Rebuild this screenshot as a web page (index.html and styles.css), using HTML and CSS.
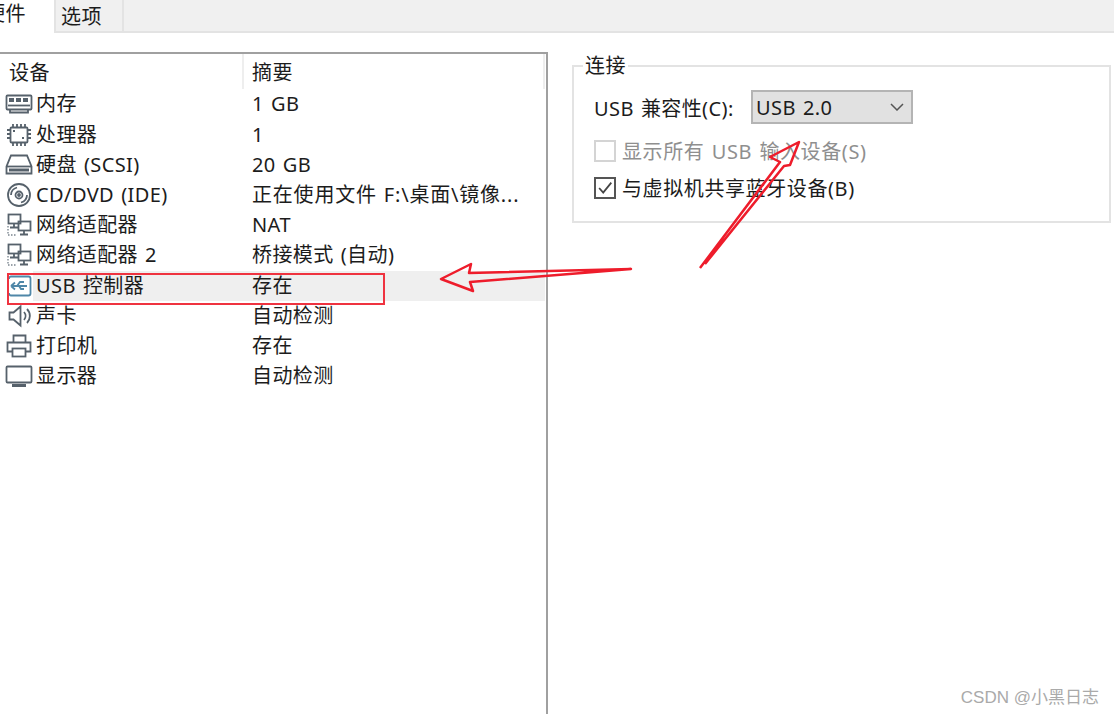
FILE: index.html
```html
<!DOCTYPE html>
<html lang="zh-CN">
<head>
    <meta charset="UTF-8">
    <title>虚拟机设置</title>
    <link rel="stylesheet" href="styles.css">
</head>
<body>

<div class="tabs">
    <div class="tab active"><span class="clipped">硬件</span></div>
    <div class="tab">选项</div>
</div>

<div class="content">
    <div class="devices">
        <div class="list-head">
            <div class="col-name">设备</div>
            <div class="col-value">摘要</div>
        </div>

        <div class="row">
            <svg class="icon" viewBox="0 0 28 24"><rect x="1.500" y="3.500" width="25" height="14" rx="1"/><rect class="solid" x="4" y="6" width="5" height="4"/><rect class="solid" x="11" y="6" width="5" height="4"/><rect class="solid" x="18" y="6" width="5" height="4"/><path d="M3 13.500h22"/><path d="M5 17.500v3h18v-3"/></svg>
            <div class="name">内存</div><div class="value">1 GB</div>
        </div>
        <div class="row">
            <svg class="icon" viewBox="0 0 28 24"><rect x="5.500" y="4.500" width="17" height="15" rx="1"/><path d="M8 1v3M12 1v3M16 1v3M20 1v3M8 20v3M12 20v3M16 20v3M20 20v3M2 7h3M2 11h3M2 15h3M23 7h3M23 11h3M23 15h3"/><rect class="solid" x="8" y="7" width="2" height="2"/><rect class="solid" x="17" y="14" width="2" height="2"/></svg>
            <div class="name">处理器</div><div class="value">1</div>
        </div>
        <div class="row">
            <svg class="icon" viewBox="0 0 28 24"><path d="M6 2.500h16l4.500 11v7h-25v-7z"/><path d="M1.500 13.500h25"/><path class="thick" d="M4 17h20"/></svg>
            <div class="name">硬盘 (SCSI)</div><div class="value">20 GB</div>
        </div>
        <div class="row">
            <svg class="icon" viewBox="0 0 28 24"><circle cx="14" cy="12" r="11"/><circle cx="14" cy="12" r="3.500"/><circle cx="14" cy="12" r="1"/><path d="M6 12a8 8 0 0 1 6-7.500M22 12a8 8 0 0 1-6 7.500"/></svg>
            <div class="name">CD/DVD (IDE)</div><div class="value wide">正在使用文件 F:\桌面\镜像...</div>
        </div>
        <div class="row">
            <svg class="icon" viewBox="0 0 28 24"><rect x="3.500" y="1.500" width="12" height="9"/><path d="M9 11v3M5 14.500h8"/><rect x="13.500" y="8.500" width="12" height="9"/><path d="M19 18v3M15 21.500h8"/><path class="dots" d="M3 13v9h9"/></svg>
            <div class="name">网络适配器</div><div class="value">NAT</div>
        </div>
        <div class="row">
            <svg class="icon" viewBox="0 0 28 24"><rect x="3.500" y="1.500" width="12" height="9"/><path d="M9 11v3M5 14.500h8"/><rect x="13.500" y="8.500" width="12" height="9"/><path d="M19 18v3M15 21.500h8"/><path class="dots" d="M3 13v9h9"/></svg>
            <div class="name">网络适配器 2</div><div class="value">桥接模式 (自动)</div>
        </div>
        <div class="row selected">
            <svg class="icon usb" viewBox="0 0 28 24"><path d="M4 5V4.500a2 2 0 0 1 2-2h17.500a2 2 0 0 1 2 2v15a2 2 0 0 1-2 2H6a2 2 0 0 1-2-2V19"/><path d="M6 12h16M6 12l4-3.500M6 12l4 3.500M12 12l3-4h4M14 12l2 3h3"/></svg>
            <div class="name">USB 控制器</div><div class="value">存在</div>
        </div>
        <div class="row">
            <svg class="icon" viewBox="0 0 28 24"><path d="M4.500 8.500h4l7-6v19l-7-6h-4z"/><path d="M19 8a6 6 0 0 1 0 8M22 5a10 10 0 0 1 0 14"/></svg>
            <div class="name">声卡</div><div class="value">自动检测</div>
        </div>
        <div class="row">
            <svg class="icon" viewBox="0 0 28 24"><path d="M8.500 8V1.500h12V8"/><path d="M7 17.500H2.500v-9h23v9H21"/><rect x="7.500" y="14.500" width="13" height="8"/></svg>
            <div class="name">打印机</div><div class="value">存在</div>
        </div>
        <div class="row">
            <svg class="icon" viewBox="0 0 28 24"><rect x="1.500" y="2.500" width="25" height="16" rx="1"/><path class="thick" d="M7 21.500h14"/></svg>
            <div class="name">显示器</div><div class="value">自动检测</div>
        </div>
    </div>

    <div class="settings">
        <fieldset class="group">
            <legend>连接</legend>
            <div class="compat">
                <span class="compat-label">USB 兼容性(C):</span>
                <div class="combo">
                    <span>USB 2.0</span>
                    <svg class="chevron" viewBox="0 0 14 8"><path d="M1 1l6 6 6-6"/></svg>
                </div>
            </div>
            <div class="check disabled"><span class="box"></span>显示所有 USB 输入设备(S)</div>
            <div class="check">
                <span class="box"><svg viewBox="0 0 20 20"><path d="M3.500 10l4.500 5 9-11"/></svg></span>与虚拟机共享蓝牙设备(B)
            </div>
        </fieldset>
    </div>
</div>

<!-- 截图上的标注 -->
<div class="highlight-box"></div>
<svg class="marks" viewBox="0 0 1114 714">
    <path d="M631 269L469 273L471 264L441 279L473 291L470 282Z"/>
    <path d="M700 268L780 162L770 157L799 142L790 165L784 166L705 264"/>
</svg>

<div class="watermark">CSDN @小黑日志</div>

</body>
</html>
```

FILE: styles.css
```css
html, body {
    margin: 0;
    height: 714px;
    overflow: hidden;
}
body {
    position: relative;
    background: #fff;
    color: #1c1c1c;
    font-family: "Noto Sans", "Noto Sans CJK SC", sans-serif;
    font-size: 20px;
    letter-spacing: 0.4px;
    word-spacing: 1.5px;
}

/* tabs */
.tabs {
    display: flex;
    height: 31px;
    background: #f0f0f0;
    border-bottom: 2px solid #e3e3e3;
}
.tab {
    width: 70px;
    height: 31px;
    box-sizing: border-box;
    line-height: 34px;
    padding-left: 5px;
    border: 2px solid #e3e3e3;
    border-top: 0;
    border-bottom: 0;
}
.tab.active {
    width: 54px;
    height: 33px;
    background: #fff;
    border: 0;
    padding: 0;
    overflow: hidden;
    line-height: 28px;
}
.clipped {
    display: block;
    margin-left: -15px;
    white-space: nowrap;
}

.content {
    display: flex;
    height: 681px;
}

/* device list */
.devices {
    width: 546px;
    margin-top: 19px;
    border-top: 2px solid #a0a0a0;
    border-right: 2px solid #a0a0a0;
    flex: none;
}
.list-head {
    display: flex;
    height: 35.4px;
    line-height: 37px;
}
.col-name {
    width: 233px;
    padding-left: 9px;
    border-right: 2px solid #eee;
}
.col-value {
    flex: 1;
    padding-left: 8px;
    margin-right: 1px;
    border-right: 2px solid #eee;
}
.row {
    display: flex;
    align-items: center;
    height: 30.2px;
    line-height: 30px;
    white-space: nowrap;
}
.icon {
    width: 28px;
    height: 24px;
    margin-left: 5px;
    flex: none;
    fill: none;
    stroke: #56616b;
    stroke-width: 1.800;
}
.icon .solid {
    fill: #56616b;
    stroke: none;
}
.icon .thick {
    stroke-width: 3;
}
.icon .dots {
    stroke-dasharray: 1.500 1.500;
    stroke: #9aa2a9;
}
.icon.usb {
    stroke: #4f87a8;
}
.name {
    width: 219px;
    padding-left: 3px;
    box-sizing: border-box;
    flex: none;
}
.value {
    flex: 1;
}
.wide {
    word-spacing: 1px;
    letter-spacing: 0.8px;
}
.selected .name,
.selected .value {
    background: #efefef;
}
.selected {
    padding-right: 1px;
}

/* right side */
.settings {
    flex: 1;
    padding: 20px 3px 0 24px;
}
.group {
    margin: 0;
    padding: 0 0 0 20px;
    height: 170px;
    box-sizing: border-box;
    border: 2px solid #e3e3e3;
    min-width: 0;
}
.group legend {
    margin-left: -11px;
    padding: 0 2px;
    line-height: 26px;
}
.compat {
    display: flex;
    align-items: center;
    margin-top: 11px;
    height: 34px;
}
.compat-label {
    width: 157px;
    flex: none;
}
.combo {
    display: flex;
    align-items: center;
    justify-content: space-between;
    width: 162px;
    height: 34px;
    box-sizing: border-box;
    padding: 0 7px 0 3px;
    background: #e1e1e1;
    border: 2px solid #b4b4b4;
}
.chevron {
    width: 14px;
    height: 8px;
    fill: none;
    stroke: #555;
    stroke-width: 1.500;
}
.check {
    display: flex;
    align-items: center;
    height: 37px;
    letter-spacing: 0.6px;
}
.compat + .check {
    margin-top: 8px;
}
.box {
    width: 22px;
    height: 22px;
    box-sizing: border-box;
    margin-right: 6px;
    border: 2px solid #555;
    background: #fff;
    flex: none;
}
.box svg {
    display: block;
    width: 18px;
    height: 18px;
    fill: none;
    stroke: #444;
    stroke-width: 2;
}
.check.disabled {
    color: #8f8f8f;
}
.check.disabled .box {
    border-color: #d4d4d4;
}

/* annotations */
.highlight-box {
    position: absolute;
    left: 7px;
    top: 273px;
    width: 378px;
    height: 32px;
    box-sizing: border-box;
    border: 2px solid #ef3340;
}
.marks {
    position: absolute;
    left: 0;
    top: 0;
    width: 1114px;
    height: 714px;
    fill: none;
    stroke: #ee1c2b;
    stroke-width: 2.500;
    stroke-linejoin: round;
    pointer-events: none;
}
.watermark {
    position: absolute;
    right: 15px;
    bottom: 6px;
    font-family: "Liberation Sans", "Noto Sans CJK SC", sans-serif;
    font-size: 17px;
    letter-spacing: 0;
    word-spacing: 0;
    color: #aaa;
    white-space: nowrap;
}
```
